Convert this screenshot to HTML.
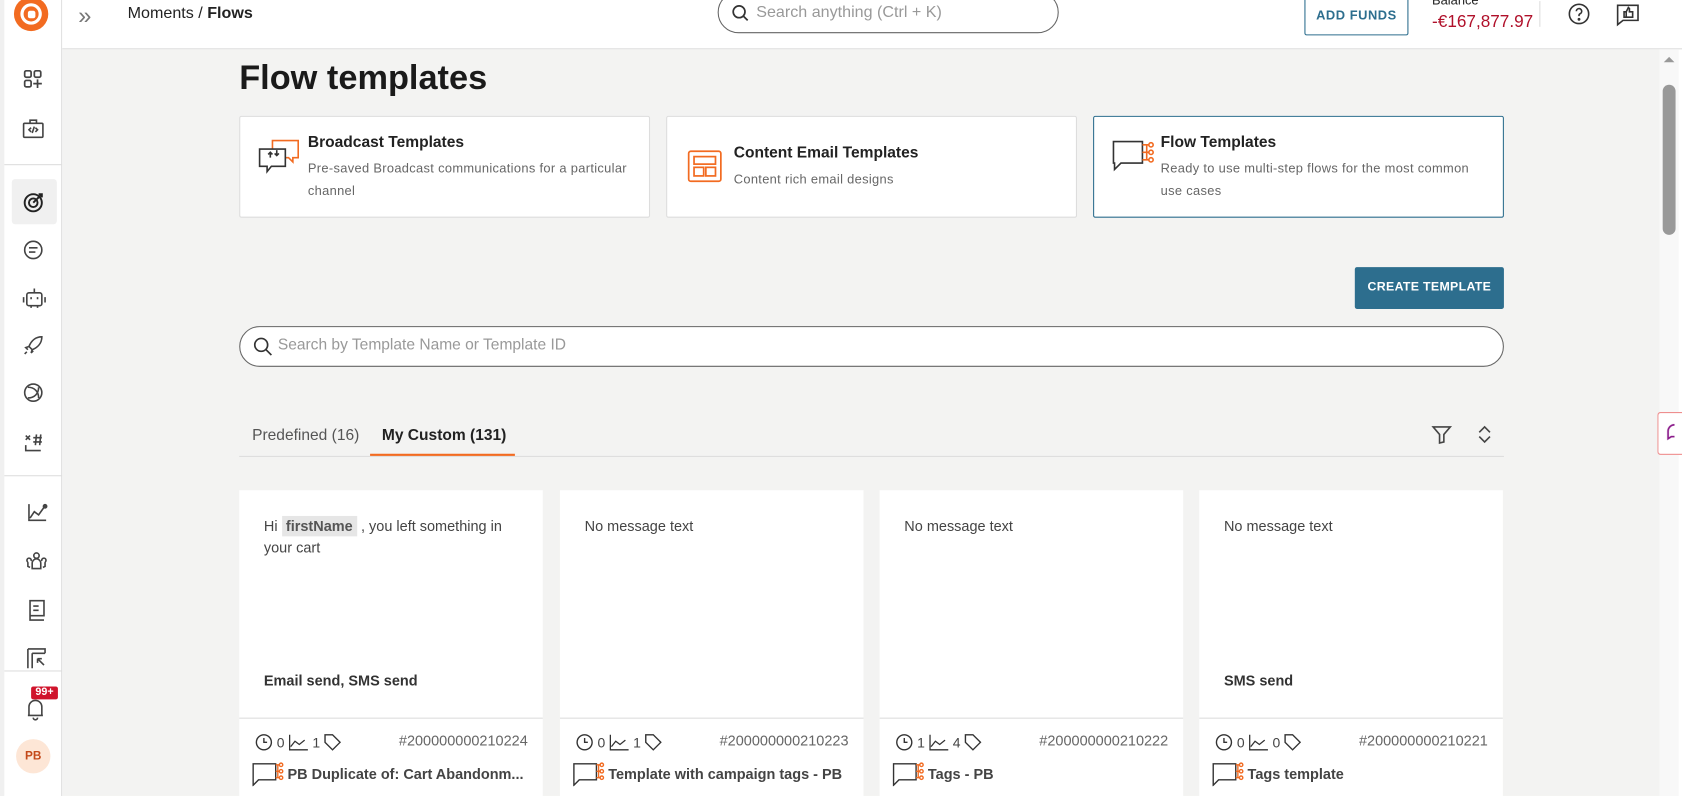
<!DOCTYPE html>
<html><head><meta charset="utf-8"><style>
*{box-sizing:border-box;margin:0;padding:0}
html,body{width:1682px;height:796px;overflow:hidden;background:#fff}
body{font-family:"Liberation Sans",sans-serif;color:#222;position:relative}
#root{position:absolute;left:0;top:0;width:1568px;height:742px;transform:scale(1.07270);transform-origin:0 0}
.side{position:absolute;left:0;top:0;width:58px;height:742px;background:#fff;border-left:4px solid #f0f0f0;border-right:1px solid #ddd}
.main{position:absolute;left:58px;top:46px;width:1489px;height:696px;background:#f3f3f2}
.hdr{position:absolute;left:58px;top:0;width:1510px;height:46px;background:#fff;border-bottom:1px solid #ddd}
.abs{position:absolute}
.ic{position:absolute;left:19px}
.card{position:absolute;background:#fff;border:1px solid #ddd;border-radius:2px}
.tc{position:absolute;top:457px;width:283px;height:300px;background:#fff}
.tc .msg{position:absolute;left:23px;top:24px;font-size:13.5px;color:#444;line-height:20px}
.tc .ty{position:absolute;left:23px;top:170px;font-size:13.5px;color:#333;font-weight:bold}
.tc .div{position:absolute;left:0;right:0;top:212px;border-top:1px solid #ddd}
.tc .meta{position:absolute;left:14px;top:226px;right:14px;font-size:13px;color:#444;height:18px;display:flex;align-items:center;gap:3px}
.tc .id{position:absolute;right:0;top:0;color:#666;font-size:13.5px}
.tc .nm{position:absolute;left:12px;top:252px;font-size:13.5px;font-weight:bold;color:#444;display:flex;align-items:center;gap:3px;white-space:nowrap}
</style></head><body><div id="root">
<div class="side">
 <div class="abs" style="left:9px;top:-3px;width:32px;height:32px;border-radius:50%;background:#f26b21"><div style="position:absolute;left:6px;top:6px;width:20px;height:20px;border-radius:50%;background:#fff"></div><div style="position:absolute;left:9px;top:9px;width:14px;height:14px;border-radius:50%;background:#f26b21"></div><div style="position:absolute;left:12.5px;top:12.5px;width:7px;height:7px;border-radius:2px;background:#fff"></div></div>
 <svg class="ic" style="left:15px;top:62px" width="24" height="24" fill="none" stroke="#444" stroke-width="1.6"><rect x="4" y="4" width="6" height="6" rx="1.5"/><rect x="13" y="4" width="6" height="6" rx="1.5"/><rect x="4" y="13" width="6" height="6" rx="1.5"/><path d="M16 12v8M12 16h8"/></svg>
 <svg class="ic" style="left:15px;top:108px" width="24" height="24" fill="none" stroke="#444" stroke-width="1.5"><rect x="3" y="7" width="18" height="13" rx="1"/><path d="M9 7V4h6v3M10 11l-2 2 2 2M14 11l2 2-2 2M13 10l-2 6"/></svg>
 <div class="abs" style="left:0;top:153px;width:54px;border-top:1px solid #ddd"></div>
 <div class="abs" style="left:7px;top:167px;width:42px;height:42px;background:#f0f0f0;border-radius:3px"></div>
 <svg class="ic" style="left:16px;top:176px" width="24" height="24" fill="none" stroke="#222" stroke-width="1.8"><circle cx="11" cy="13" r="8"/><circle cx="11" cy="13" r="4"/><path d="M11 13l8-8M16 5h3v3"/></svg>
 <svg class="ic" style="left:16px;top:222px" width="22" height="22" fill="none" stroke="#444" stroke-width="1.5"><circle cx="11" cy="11" r="8"/><path d="M7 9h8M7 13h6"/></svg>
 <svg class="ic" style="left:16px;top:266px" width="24" height="24" fill="none" stroke="#444" stroke-width="1.5"><rect x="5" y="7" width="14" height="12" rx="2"/><path d="M12 3v4M9 11v2M15 11v2M2 11v5M22 11v5M9 19v2M15 19v2"/></svg>
 <svg class="ic" style="left:16px;top:311px" width="22" height="22" fill="none" stroke="#444" stroke-width="1.5"><path d="M19 3c-6 0-10 4-12 9l3 3c5-2 9-6 9-12zM7 12l-3 1 2 2M10 15l-1 3 2-2M5 17l-2 2"/></svg>
 <svg class="ic" style="left:16px;top:355px" width="22" height="22" fill="none" stroke="#444" stroke-width="1.5"><circle cx="11" cy="11" r="8"/><path d="M6 6c6 0 10 4 10 10M16 6c0 6-4 10-10 10"/></svg>
 <svg class="ic" style="left:16px;top:400px" width="22" height="22" fill="none" stroke="#444" stroke-width="1.5"><path d="M4 6l4 4M8 6l-4 4M11 8h8M11 12h8M14 5l-1 10M18 5l-1 10M4 15v5h14"/></svg>
 <div class="abs" style="left:0;top:443px;width:54px;border-top:1px solid #ddd"></div>
 <svg class="ic" style="left:18px;top:466px" width="24" height="24" fill="none" stroke="#444" stroke-width="1.5"><path d="M5 4v15h16M6 17l4-6 4 3 5-7"/><circle cx="20" cy="6" r="1.5" fill="#444"/></svg>
 <svg class="ic" style="left:18px;top:512px" width="24" height="24" fill="none" stroke="#444" stroke-width="1.5"><circle cx="12" cy="6" r="2.5"/><path d="M8 18v-5a4 4 0 0 1 8 0v5zM4 12a2 2 0 1 1 3-1M20 12a2 2 0 1 0-3-1M4 12v4l2 1M20 12v4l-2 1"/></svg>
 <svg class="ic" style="left:18px;top:557px" width="24" height="24" fill="none" stroke="#444" stroke-width="1.5"><path d="M6 3h13v14H6zM6 3v18h13M9 8h5M9 12h5"/></svg>
 <svg class="ic" style="left:18px;top:601px" width="24" height="24" fill="none" stroke="#444" stroke-width="1.5"><path d="M4 4h16v4M4 4v18M8 8h12M8 8v14M13 13l6 6M13 13h4M13 13v4"/></svg>
 <div class="abs" style="left:0;top:625px;width:54px;border-top:1px solid #ddd"></div>
 <svg class="ic" style="left:18px;top:648px" width="24" height="26" fill="none" stroke="#444" stroke-width="1.5"><path d="M5 19V11a6 6 0 0 1 12 0v8H4h14M9 21a2 2 0 0 0 4 0"/></svg>
 <div class="abs" style="left:25px;top:640px;width:25px;height:12px;background:#d0142c;color:#fff;font-size:10px;font-weight:bold;text-align:center;line-height:12px;border-radius:2px">99+</div>
 <div class="abs" style="left:11px;top:689px;width:32px;height:32px;border-radius:50%;background:#fde6d6;color:#c4491a;font-size:11px;font-weight:bold;text-align:center;line-height:32px">PB</div>
</div>
<div class="hdr">
 <div class="abs" style="left:15px;top:2px;font-size:22px;color:#777">»</div>
 <div class="abs" style="left:61px;top:4px;font-size:15px;color:#222">Moments / <b>Flows</b></div>
 <div class="abs" style="left:611px;top:-8px;width:318px;height:39px;border:1px solid #666;border-radius:20px"></div>
 <svg class="abs" style="left:624px;top:4px" width="16" height="16" fill="none" stroke="#333" stroke-width="1.6"><circle cx="7" cy="7" r="5.5"/><path d="M11 11l4 4"/></svg>
 <div class="abs" style="left:647px;top:3px;font-size:15px;color:#999">Search anything (Ctrl + K)</div>
 <div class="abs" style="left:1158px;top:-6px;width:97px;height:39px;border:1px solid #2d6e8e;border-radius:2px;color:#2d6e8e;font-size:12px;font-weight:bold;letter-spacing:.5px;text-align:center;padding-top:6px;line-height:26px">ADD FUNDS</div>
 <div class="abs" style="left:1277px;top:-7px;font-size:12px;color:#222">Balance</div>
 <div class="abs" style="left:1277px;top:12px;font-size:16px;color:#b0102a">-€167,877.97</div>
 <div class="abs" style="left:1377px;top:1px;height:24px;border-left:1px solid #ddd"></div>
 <svg class="abs" style="left:1403px;top:2px" width="22" height="22" fill="none" stroke="#333" stroke-width="1.5"><circle cx="11" cy="11" r="9"/><path d="M8.5 8.5a2.5 2.5 0 1 1 3.5 2.3c-.7.4-1 .9-1 1.7v.5"/><circle cx="11" cy="16" r=".6" fill="#333"/></svg>
 <svg class="abs" style="left:1448px;top:3px" width="24" height="22" fill="none" stroke="#333" stroke-width="1.5"><path d="M2 2h19v14H7l-5 4z"/><path d="M8 8h2v5H8zM10 8l2-4 1 1v3h3v5h-6"/></svg>
</div>
<div class="main">
 <div class="abs" style="left:165px;top:8px;font-size:32px;font-weight:bold;color:#1a1a1a">Flow templates</div>
 <div class="card" style="left:165px;top:62px;width:383px;height:95px">
  <svg class="abs" style="left:16px;top:20px" width="40" height="34" fill="none" stroke-width="1.5"><path d="M14 2h24v16h-5v4l-4-4h-15z" stroke="#f26b21"/><path d="M2 10h24v16H13l-4 5v-5H2z" stroke="#333" fill="#fff"/><path d="M12 18v-5M10 15l2-2 2 2M18 11v5M16 14l2 2 2-2" stroke="#333"/></svg>
  <div class="abs" style="left:63px;top:16px;font-size:14.5px;font-weight:bold">Broadcast Templates</div>
  <div class="abs" style="left:63px;top:38px;font-size:12px;color:#666;line-height:21px;width:305px;letter-spacing:.3px">Pre-saved Broadcast communications for a particular channel</div>
 </div>
 <div class="card" style="left:563px;top:62px;width:383px;height:95px">
  <svg class="abs" style="left:18px;top:30px" width="34" height="32" fill="none" stroke="#f26b21" stroke-width="1.6"><rect x="2" y="2" width="30" height="28" rx="2"/><rect x="7" y="7" width="20" height="7"/><rect x="7" y="17" width="9" height="8"/><rect x="18" y="17" width="9" height="8"/></svg>
  <div class="abs" style="left:62px;top:26px;font-size:14.5px;font-weight:bold">Content Email Templates</div>
  <div class="abs" style="left:62px;top:48px;font-size:12px;color:#666;line-height:21px;letter-spacing:.3px">Content rich email designs</div>
 </div>
 <div class="card" style="left:961px;top:62px;width:383px;height:95px;border-color:#2d6e8e">
  <svg class="abs" style="left:16px;top:20px" width="42" height="32" fill="none" stroke-width="1.5"><path d="M2 3h27v20H9l-6 6v-6H2z" stroke="#333"/><path d="M29 6h6M29 13h6M29 20h6M33 6v14" stroke="#f26b21"/><circle cx="37" cy="6" r="2" stroke="#f26b21"/><circle cx="37" cy="13" r="2" stroke="#f26b21"/><circle cx="37" cy="20" r="2" stroke="#f26b21"/></svg>
  <div class="abs" style="left:62px;top:16px;font-size:14.5px;font-weight:bold">Flow Templates</div>
  <div class="abs" style="left:62px;top:38px;font-size:12px;color:#666;line-height:21px;width:305px;letter-spacing:.3px">Ready to use multi-step flows for the most common use cases</div>
 </div>
 <div class="abs" style="left:1205px;top:203px;width:139px;height:39px;background:#2d6e8e;color:#fff;font-size:11.5px;font-weight:bold;text-align:center;line-height:39px;border-radius:2px;letter-spacing:.3px">CREATE TEMPLATE</div>
 <div class="abs" style="left:165px;top:258px;width:1179px;height:38px;border:1px solid #666;border-radius:19px;background:#fff"></div>
 <svg class="abs" style="left:178px;top:268px" width="18" height="18" fill="none" stroke="#333" stroke-width="1.6"><circle cx="7.5" cy="7.5" r="6"/><path d="M12 12l5 5"/></svg>
 <div class="abs" style="left:201px;top:268px;font-size:14.5px;color:#999">Search by Template Name or Template ID</div>
 <div class="abs" style="left:165px;top:379px;width:1179px;border-top:1px solid #ddd"></div>
 <div class="abs" style="left:177px;top:352px;font-size:14.5px;color:#555">Predefined (16)</div>
 <div class="abs" style="left:298px;top:352px;font-size:14.5px;font-weight:bold;color:#222">My Custom (131)</div>
 <div class="abs" style="left:287px;top:377px;width:135px;height:2px;background:#f26b21"></div>
 <svg class="abs" style="left:1276px;top:349px" width="20" height="20" fill="none" stroke="#444" stroke-width="1.5"><path d="M2 3h16l-6 7v7l-4 1v-8z"/></svg>
 <svg class="abs" style="left:1318px;top:349px" width="16" height="20" fill="none" stroke="#444" stroke-width="1.5"><path d="M3 8l5-5 5 5M3 12l5 5 5-5"/></svg>
</div>
<div class="abs" style="left:1547px;top:46px;width:18px;height:696px;background:#f8f8f8"></div>
<div class="abs" style="left:1551px;top:53px;width:0;height:0;border:5px solid transparent;border-bottom-color:#999;border-top:0"></div>
<div class="abs" style="left:1550px;top:79px;width:12px;height:140px;background:#999;border-radius:6px"></div>
<div class="abs" style="left:1545px;top:384px;width:140px;height:40px;border:1px solid #e88;border-radius:3px;background:#fff"></div>
<svg class="abs" style="left:1553px;top:394px" width="16" height="18" fill="none" stroke="#8a1a8a" stroke-width="1.6"><path d="M8 2a6 6 0 0 0-6 6v7l3-2h3"/></svg>

<div class="tc" style="left:223px"><div class="msg">Hi <span style="background:#e6e6e6;padding:2px 4px;font-weight:bold;color:#555">firstName</span> , you left something in<br>your cart</div><div class="ty">Email send, SMS send</div><div class="div"></div>
 <div class="meta"><svg width="18" height="18" fill="none" stroke="#333" stroke-width="1.3"><circle cx="9" cy="9" r="7"/><path d="M9 5v4h3"/></svg>0<svg width="20" height="16" fill="none" stroke="#333" stroke-width="1.2"><path d="M2 1v14h17M3 12l4-5 4 3 5-4"/></svg>1<svg width="18" height="18" fill="none" stroke="#333" stroke-width="1.3"><path d="M2 2h7l7 7-7 7-7-7z"/></svg><span class="id">#200000000210224</span></div>
 <div class="nm"><svg width="30" height="24" fill="none" stroke-width="1.3"><path d="M1 3h21v15H6l-5 5z" stroke="#333"/><path d="M22 4h4M22 10h4M22 16h4M24 4v12" stroke="#f26b21"/><circle cx="27" cy="4" r="1.6" stroke="#f26b21"/><circle cx="27" cy="10" r="1.6" stroke="#f26b21"/><circle cx="27" cy="16" r="1.6" stroke="#f26b21"/></svg>PB Duplicate of: Cart Abandonm...</div></div>
<div class="tc" style="left:522px"><div class="msg">No message text</div><div class="div"></div>
 <div class="meta"><svg width="18" height="18" fill="none" stroke="#333" stroke-width="1.3"><circle cx="9" cy="9" r="7"/><path d="M9 5v4h3"/></svg>0<svg width="20" height="16" fill="none" stroke="#333" stroke-width="1.2"><path d="M2 1v14h17M3 12l4-5 4 3 5-4"/></svg>1<svg width="18" height="18" fill="none" stroke="#333" stroke-width="1.3"><path d="M2 2h7l7 7-7 7-7-7z"/></svg><span class="id">#200000000210223</span></div>
 <div class="nm"><svg width="30" height="24" fill="none" stroke-width="1.3"><path d="M1 3h21v15H6l-5 5z" stroke="#333"/><path d="M22 4h4M22 10h4M22 16h4M24 4v12" stroke="#f26b21"/><circle cx="27" cy="4" r="1.6" stroke="#f26b21"/><circle cx="27" cy="10" r="1.6" stroke="#f26b21"/><circle cx="27" cy="16" r="1.6" stroke="#f26b21"/></svg>Template with campaign tags - PB</div></div>
<div class="tc" style="left:820px"><div class="msg">No message text</div><div class="div"></div>
 <div class="meta"><svg width="18" height="18" fill="none" stroke="#333" stroke-width="1.3"><circle cx="9" cy="9" r="7"/><path d="M9 5v4h3"/></svg>1<svg width="20" height="16" fill="none" stroke="#333" stroke-width="1.2"><path d="M2 1v14h17M3 12l4-5 4 3 5-4"/></svg>4<svg width="18" height="18" fill="none" stroke="#333" stroke-width="1.3"><path d="M2 2h7l7 7-7 7-7-7z"/></svg><span class="id">#200000000210222</span></div>
 <div class="nm"><svg width="30" height="24" fill="none" stroke-width="1.3"><path d="M1 3h21v15H6l-5 5z" stroke="#333"/><path d="M22 4h4M22 10h4M22 16h4M24 4v12" stroke="#f26b21"/><circle cx="27" cy="4" r="1.6" stroke="#f26b21"/><circle cx="27" cy="10" r="1.6" stroke="#f26b21"/><circle cx="27" cy="16" r="1.6" stroke="#f26b21"/></svg>Tags - PB</div></div>
<div class="tc" style="left:1118px"><div class="msg">No message text</div><div class="ty">SMS send</div><div class="div"></div>
 <div class="meta"><svg width="18" height="18" fill="none" stroke="#333" stroke-width="1.3"><circle cx="9" cy="9" r="7"/><path d="M9 5v4h3"/></svg>0<svg width="20" height="16" fill="none" stroke="#333" stroke-width="1.2"><path d="M2 1v14h17M3 12l4-5 4 3 5-4"/></svg>0<svg width="18" height="18" fill="none" stroke="#333" stroke-width="1.3"><path d="M2 2h7l7 7-7 7-7-7z"/></svg><span class="id">#200000000210221</span></div>
 <div class="nm"><svg width="30" height="24" fill="none" stroke-width="1.3"><path d="M1 3h21v15H6l-5 5z" stroke="#333"/><path d="M22 4h4M22 10h4M22 16h4M24 4v12" stroke="#f26b21"/><circle cx="27" cy="4" r="1.6" stroke="#f26b21"/><circle cx="27" cy="10" r="1.6" stroke="#f26b21"/><circle cx="27" cy="16" r="1.6" stroke="#f26b21"/></svg>Tags template</div></div>
</div></body></html>
